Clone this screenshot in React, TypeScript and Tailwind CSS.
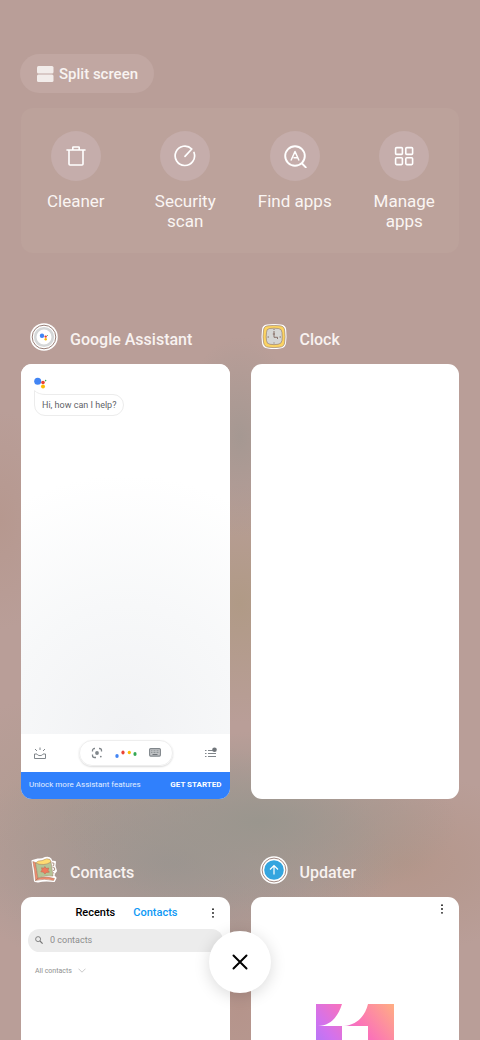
import type { ReactNode } from "react";

type Shortcut = { label: string; icon: ReactNode };

const shortcuts: Shortcut[] = [
  { label: "Cleaner", icon: <TrashIcon /> },
  { label: "Security scan", icon: <ScanIcon /> },
  { label: "Find apps", icon: <FindIcon /> },
  { label: "Manage apps", icon: <GridIcon /> },
];

export default function App() {
  return (
    <div className="relative h-screen overflow-hidden bg-[#b99e98] bg-[radial-gradient(ellipse_60px_100px_at_50%_42%,#a59892_0%,transparent_100%),radial-gradient(ellipse_90px_120px_at_50%_58%,#b09a86_0%,transparent_100%),radial-gradient(ellipse_200px_90px_at_54%_79%,#9a968e_0%,transparent_100%),radial-gradient(ellipse_220px_120px_at_36%_83%,#9d9591_0%,transparent_100%),radial-gradient(ellipse_150px_90px_at_84%_83%,#b4968a_0%,transparent_100%),radial-gradient(ellipse_150px_120px_at_15%_78%,#b09b91_0%,transparent_100%),radial-gradient(ellipse_60px_110px_at_0%_50%,#b6988f_0%,transparent_100%),radial-gradient(ellipse_120px_140px_at_50%_97%,#b5948b_0%,transparent_100%)] px-5 pt-[54px] font-['Roboto',sans-serif]">
      <button type="button" className="flex h-[39px] items-center gap-[5px] rounded-full bg-[#c1a7a2] pt-px pr-4 pl-4 text-[15px] font-medium text-[#f8f3f1]">
        <SplitIcon />
        Split screen
      </button>

      <nav className="mx-px mt-[15px] grid h-[145px] grid-cols-4 rounded-xl bg-[#bca29b] pt-[23px]">
        {shortcuts.map((item) => (
          <button key={item.label} type="button" className="flex flex-col items-center gap-[10px] text-[17px] leading-5 text-[#faf5f3]">
            <span className="flex size-[50px] items-center justify-center rounded-full bg-[#c5adab]">{item.icon}</span>
            <span className="w-[76px]">{item.label}</span>
          </button>
        ))}
      </nav>

      <main className="mx-px mt-[66px] grid grid-cols-2 gap-x-[21px] gap-y-[53px]">
        <Task title="Google Assistant" icon={<AssistantAppIcon />}>
          <AssistantScreen />
        </Task>
        <Task title="Clock" icon={<ClockAppIcon />} />
        <Task title="Contacts" icon={<ContactsAppIcon />}>
          <ContactsScreen />
        </Task>
        <Task title="Updater" icon={<UpdaterAppIcon />}>
          <UpdaterScreen />
        </Task>
      </main>

      <button type="button" aria-label="Close all" className="absolute bottom-[47px] left-1/2 flex size-[62px] -translate-x-1/2 items-center justify-center rounded-full bg-white shadow-[0_3px_16px_rgba(0,0,0,0.15)]">
        <svg viewBox="0 0 16 16" className="size-4" stroke="#000" strokeWidth="2" strokeLinecap="round" aria-hidden>
          <path d="M1.5 1.5l13 13M14.5 1.5l-13 13" />
        </svg>
      </button>
    </div>
  );
}

function Task({ title, icon, children }: { title: string; icon: ReactNode; children?: ReactNode }) {
  return (
    <section>
      <header className="flex h-[45px] items-start gap-[10px] pl-[9px]">
        <span className="size-[30px] shrink-0 pt-1">{icon}</span>
        <h2 className="pt-[11px] text-[16px] leading-5 font-medium text-[#f8f2f0]">{title}</h2>
      </header>
      <div className="flex aspect-[209/436] flex-col overflow-hidden rounded-[11px] bg-white">{children}</div>
    </section>
  );
}

function AssistantScreen() {
  return (
    <>
      <div className="flex-1 bg-[radial-gradient(ellipse_115%_70%_at_50%_100%,#f1f2f4_0%,#f7f8f9_50%,#ffffff_100%)] px-[13px] pt-[13px]">
        <AssistantDots className="h-3 w-[13px]" />
        <div className="relative mt-[5px] w-fit">
          <p className="rounded-full rounded-tl-none border border-[#ececec] bg-white px-[7px] text-[9px] leading-5 text-[#5f6368]">
            Hi, how can I help?
          </p>
          {/* speech bubble tail */}
          <svg viewBox="0 0 12 6" className="absolute -top-1 left-0 h-[6px] w-3" fill="#fff" stroke="#ececec" aria-hidden>
            <path d="M.5 6V.5Q4 4.500 12 4.500" />
          </svg>
        </div>
      </div>
      <div className="flex h-[38px] items-center justify-between bg-white pr-[13px] pl-3 text-[#80868b]">
        <button type="button" aria-label="Updates">
          <svg viewBox="0 0 14 14" className="size-[14px]" fill="none" stroke="currentColor" aria-hidden>
            <path d="M1.500 8v4.500h11V8H10c-.5 1-1.500 1.600-3 1.600S4.500 9 4 8z M7 1.500v2.500M2 3l2 2M12 3l-2 2" />
          </svg>
        </button>
        <div className="flex h-[26px] w-[94px] items-center justify-between rounded-full border border-[#eeeeee] px-[11px] shadow-[0_1px_2px_rgba(0,0,0,0.15)]">
          <button type="button" aria-label="Lens">
            <svg viewBox="0 0 12 12" className="size-3" fill="none" stroke="currentColor" strokeWidth="1.300" aria-hidden>
              <path d="M1.500 4.500V3.500a2 2 0 0 1 2-2h.5M8 1.500h.5a2 2 0 0 1 2 2v1M1.500 7.500v1a2 2 0 0 0 2 2h1.500" />
              <circle cx="6" cy="6" r="1.900" fill="currentColor" stroke="none" />
              <circle cx="9.800" cy="9.600" r="0.900" fill="currentColor" stroke="none" />
            </svg>
          </button>
          <button type="button" aria-label="Speak">
            <svg viewBox="0 0 22 10" className="h-[10px] w-[22px]" aria-hidden>
              <ellipse cx="2" cy="8" rx="1.700" ry="2" fill="#4285f4" />
              <ellipse cx="8" cy="4.500" rx="1.600" ry="1.900" fill="#ea4335" />
              <ellipse cx="14.300" cy="4.500" rx="1.600" ry="1.700" fill="#fbbc04" />
              <ellipse cx="20" cy="6" rx="1.600" ry="2" fill="#34a853" />
            </svg>
          </button>
          <button type="button" aria-label="Keyboard">
            <svg viewBox="0 0 12 9" className="h-[9px] w-3" aria-hidden>
              <rect x=".6" y=".6" width="10.800" height="7.500" rx="1" fill="#c4c6c8" stroke="currentColor" strokeWidth="1.100" />
              <path d="M2 2.800h8M2 4.600h8" stroke="#8d9296" strokeDasharray="1 .5" />
              <path d="M3.500 6.500h5" stroke="#70757a" />
            </svg>
          </button>
        </div>
        <button type="button" aria-label="Explore">
          <svg viewBox="0 0 12 12" className="size-3" stroke="currentColor" aria-hidden>
            <path d="M0 3.500h1.500M0 6.500h1.500M0 9.500h1.500M3 3.500h5M3 6.500h8M3 9.500h8" strokeWidth="1.200" />
            <circle cx="9.500" cy="2.800" r="2.300" fill="#70757a" stroke="none" />
          </svg>
        </button>
      </div>
      <div className="flex h-[27px] items-center justify-between bg-[#3080fc] px-2 text-[8px] text-[#e3eeff]">
        <span>Unlock more Assistant features</span>
        <button type="button" className="font-bold text-white">GET STARTED</button>
      </div>
    </>
  );
}

function ContactsScreen() {
  return (
    <>
      <div className="flex h-[32px] items-center justify-end gap-[18px] pr-[14px] text-[11px] font-medium">
        <button type="button" className="text-black">Recents</button>
        <button type="button" className="text-[#0d99f5]">Contacts</button>
        <button type="button" aria-label="More" className="ml-[14px]">
          <MoreIcon />
        </button>
      </div>
      <label className="mx-[7px] flex h-[23px] items-center gap-[7px] rounded-full bg-[#ececec] pl-[7px]">
        <svg viewBox="0 0 9 9" className="size-2 shrink-0" fill="none" stroke="#777" aria-hidden>
          <circle cx="3.500" cy="3.500" r="2.800" />
          <path d="M5.600 5.600l3 3" strokeWidth="1.300" />
        </svg>
        <input type="text" aria-label="Search contacts" placeholder="0 contacts" className="w-full min-w-0 bg-transparent text-[9px] outline-none placeholder:text-[#8c8c8c]" />
      </label>
      <button type="button" className="mt-[13px] flex items-center gap-[6px] pl-[14px] text-[7px] leading-3 text-[#8f8f8f]">
        All contacts
        <svg viewBox="0 0 8 5" className="h-[5px] w-2" fill="none" stroke="#bbb" strokeWidth=".8" aria-hidden>
          <path d="M.5 .7L4 4.200 7.500 .7" />
        </svg>
      </button>
    </>
  );
}

function UpdaterScreen() {
  return (
    <>
      <button type="button" aria-label="More" className="mt-[7px] mr-[14px] self-end">
        <MoreIcon />
      </button>
      <svg viewBox="0 0 78 100" className="mt-[90px] h-[100px] w-[78px] self-center" aria-hidden>
        <defs>
          <linearGradient id="miui" x1="0" y1="62" x2="78" y2="0" gradientUnits="userSpaceOnUse">
            <stop offset="0" stopColor="#9b7cff" />
            <stop offset=".3" stopColor="#d072ef" />
            <stop offset=".6" stopColor="#fb72b9" />
            <stop offset="1" stopColor="#ffae82" />
          </linearGradient>
        </defs>
        <path d="M0 0H26C22 13 14 22 2 22H26V100H0z M52 0H78V100H52V22H28C40 21 49 13 52 0z" fill="url(#miui)" />
      </svg>
    </>
  );
}

function MoreIcon() {
  return (
    <svg viewBox="0 0 6 10" className="h-[10px] w-[6px]" fill="#111" aria-hidden>
      <circle cx="3" cy="1.200" r=".9" />
      <circle cx="3" cy="5" r=".9" />
      <circle cx="3" cy="8.800" r=".9" />
    </svg>
  );
}

function AssistantDots({ className }: { className?: string }) {
  return (
    <svg viewBox="0 0 13 12" className={className} aria-hidden>
      <circle cx="3.700" cy="4.200" r="3.500" fill="#4285f4" />
      <circle cx="9" cy="5.500" r="1.800" fill="#ea4335" />
      <circle cx="9" cy="9.500" r="2" fill="#fbbc04" />
      <circle cx="11.600" cy="3.600" r=".8" fill="#34a853" />
    </svg>
  );
}

function AssistantAppIcon() {
  return (
    <svg viewBox="0 0 28 28" className="size-7" aria-hidden>
      <circle cx="14" cy="14" r="13.800" fill="#fff" />
      <circle cx="14" cy="14" r="11.800" fill="#fff" stroke="#8d7069" strokeWidth=".9" />
      <circle cx="14" cy="14" r="8.800" fill="#fff" stroke="#d5d7d8" strokeWidth="2.600" />
      <circle cx="12" cy="12.800" r="2.200" fill="#4285f4" />
      <circle cx="15.700" cy="13.600" r="1.200" fill="#ea4335" />
      <circle cx="15.700" cy="16.200" r="1.200" fill="#fbbc04" />
      <circle cx="17.400" cy="12.600" r=".5" fill="#34a853" />
    </svg>
  );
}

function ClockAppIcon() {
  return (
    <svg viewBox="0 0 28 28" className="size-7" fill="none" aria-hidden>
      <path d="M7 1.500Q14 .5 21 1.500Q26 2 26.200 7Q27 14 26 20Q25.500 25 20 25.500Q14 26.500 8 25.500Q2.500 25 2 20Q1 14 2 7Q2 2 7 1.500z" fill="#fff" />
      <path d="M8 2.800Q14 2 20 2.800Q24.500 3 24.700 8Q25.500 14 24.700 19Q24.500 24 19.500 24.200Q14 25 8.500 24.200Q4 24 3.500 19Q2.500 14 3.500 8Q3.500 3 8 2.800z" fill="#fbd363" stroke="#8e7365" strokeWidth=".6" />
      <path d="M9.500 5.500Q14 4.800 18.500 5.500Q21.900 5.800 22 9.500Q22.500 14 22 17.500Q21.500 21 18 21.300Q14 22 10 21.300Q6.700 21 6.500 17.500Q5.800 14 6.500 9.500Q6.500 5.800 9.500 5.500z" fill="#d5d6d4" stroke="#8e7365" strokeWidth=".6" />
      <path d="M14 8V14.300H17.500V16M12.800 11H15M14 6v1M14 19.500v1M7.500 14H9M19.500 14H21" stroke="#80665f" strokeWidth=".9" />
    </svg>
  );
}

function ContactsAppIcon() {
  return (
    <svg viewBox="0 0 28 28" className="size-7" strokeLinejoin="round" aria-hidden>
      <path d="M2.500 5L8 3.500Q12 4 15 2Q19 1 20.500 3L21.500 5.500L25 6L24.500 10L26 15L24 17.500L23.500 20L25.500 22L24 25Q14 24 8 25.500L5 25Q4 14 2.500 5z" fill="#fff" stroke="#fff" strokeWidth="2" />
      <path d="M2.800 5.500L5.500 6.500L8 22L5.500 24.500Q5 15 2.800 5.500z M8 22Q16 20 24.500 22.500L23.500 24.500Q14 22 5.500 24.500z" fill="#f08c6e" stroke="#a27c62" strokeWidth=".5" />
      <path d="M5.500 7Q13 10 21 5.500L23 20Q16 19 8 22z" fill="#b4c496" stroke="#a27c62" strokeWidth=".5" />
      <path d="M5.500 7Q8 4.300 12 4.600Q17 1.500 20 3.500L21 6Q14 10.500 5.500 7z" fill="#fddb72" stroke="#a27c62" strokeWidth=".5" />
      <path d="M14.800 10.500l1.300 1.800 2.700-.3-.8 2.300 1.400 1.900-2.800.2-1.800 1.700-1.300-1.900-2.700-.4 1.300-1.800-.6-2.200 2.400.4z" fill="#f07a5c" stroke="#b86650" strokeWidth=".5" />
      <path d="M22 6.800l2 .4-.4 2.600-1.200.2M22.600 11.500l2 .4v2.300l-1.600.3M23 16.500l1.200.8" fill="none" stroke="#8e6a57" strokeWidth=".7" />
    </svg>
  );
}

function UpdaterAppIcon() {
  return (
    <svg viewBox="0 0 28 28" className="size-7" fill="none" aria-hidden>
      <circle cx="14" cy="14" r="13.700" fill="#fff" />
      <circle cx="14" cy="14" r="11.900" fill="#fff" stroke="#967b73" strokeWidth=".9" />
      <circle cx="14" cy="14" r="9.800" fill="#34a5df" />
      <path d="M14 18.500V10M10 13.500L14 9.500L18 13.500" stroke="#fff" strokeWidth="1.200" />
    </svg>
  );
}

function SplitIcon() {
  return (
    <svg viewBox="0 0 18 16" className="h-4 w-[18px]" fill="#f2ecea" aria-hidden>
      <rect x="1" width="16.500" height="7.400" rx="1.500" />
      <rect x="1" y="8.600" width="16.500" height="7.400" rx="1.500" />
    </svg>
  );
}

function TrashIcon() {
  return (
    <svg viewBox="0 0 24 24" className="size-6" fill="none" stroke="#fff" strokeWidth="1.600" strokeLinecap="round" strokeLinejoin="round" aria-hidden>
      <path d="M3 6h18M5 6v14q0 1 1 1h12q1 0 1-1V6M8.800 6V3.500q0-.5.5-.5h5.400q.5 0 .5.500V6" />
    </svg>
  );
}

function ScanIcon() {
  return (
    <svg viewBox="0 0 24 24" className="size-6" fill="none" stroke="#fff" strokeWidth="1.700" strokeLinecap="round" strokeLinejoin="round" aria-hidden>
      <path d="M12 12.300L18.800 5A9.700 9.700 0 1 0 21 8.500" />
    </svg>
  );
}

function FindIcon() {
  return (
    <svg viewBox="0 0 24 24" className="size-6" fill="none" stroke="#fff" strokeWidth="1.900" strokeLinecap="round" strokeLinejoin="round" aria-hidden>
      <circle cx="12" cy="12" r="9.800" />
      <path d="M19 19.500l3.800 3.800" />
      <path d="M8.200 16L12 7.500L15.800 16M11 13.800H14.500" strokeWidth="1.500" />
    </svg>
  );
}

function GridIcon() {
  return (
    <svg viewBox="0 0 24 24" className="size-6" fill="none" stroke="#fff" strokeWidth="1.600" aria-hidden>
      <rect x="3.600" y="3.600" width="6.800" height="6.800" rx="1" />
      <rect x="13.800" y="3.600" width="6.800" height="6.800" rx="1" />
      <rect x="3.600" y="13.800" width="6.800" height="6.800" rx="1" />
      <rect x="13.800" y="13.800" width="6.800" height="6.800" rx="1" />
    </svg>
  );
}
